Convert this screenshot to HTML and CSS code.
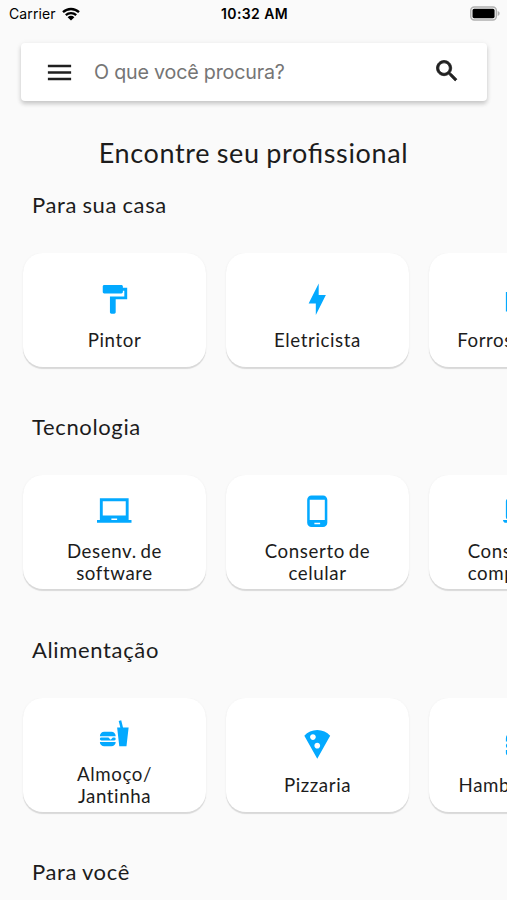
FILE: index.html
```html
<!DOCTYPE html>
<html lang="pt-BR">
  <head>
    <meta charset="UTF-8" />
    <title>Encontre seu profissional</title>
    <link rel="stylesheet" href="styles.css">
  </head>
  <body>
    <div class="status">
      <div class="carrier">
        <span>Carrier</span>
        <svg class="wifi" viewBox="0 0 18 14">
          <path d="M1 5.2a11.6 11.6 0 0 1 16 0M3.8 8.2a7.6 7.6 0 0 1 10.4 0" fill="none" stroke="#000" stroke-width="2.3" />
          <path d="M9 13.6L5.6 10.2a4.9 4.9 0 0 1 6.8 0z" />
        </svg>
      </div>
      <div class="time">10:32 AM</div>
      <div class="power">
        <svg class="battery" viewBox="0 0 31 15">
          <rect x=".8" y=".8" width="26.4" height="13.4" rx="3.6" fill="#fafafa" stroke="#b0b0b0" stroke-width="1.5" />
          <rect x="2.6" y="2.7" width="22.8" height="9.6" rx="1.6" />
          <path d="M28.6 5c1.3.4 2 1.3 2 2.5s-.7 2.1-2 2.5z" fill="#b0b0b0" />
        </svg>
      </div>
    </div>

    <div class="search">
      <svg class="menu" viewBox="0 0 24 24"><path d="M3 18h18v-2H3v2zm0-5h18v-2H3v2zm0-7v2h18V6H3z" /></svg>
      <span class="placeholder">O que você procura?</span>
      <svg class="lens" viewBox="0 0 24 24"><path d="M15.5 14h-.79l-.28-.27C15.41 12.59 16 11.11 16 9.5 16 5.91 13.09 3 9.5 3S3 5.91 3 9.5 5.91 16 9.5 16c1.61 0 3.09-.59 4.23-1.57l.27.28v.79l5 4.99L20.49 19l-4.99-5zm-6 0C7.01 14 5 11.99 5 9.5S7.01 5 9.5 5 14 7.01 14 9.5 11.99 14 9.5 14z" /></svg>
    </div>

    <h1>Encontre seu profissional</h1>

    <section>
      <h2>Para sua casa</h2>
      <div class="cards">
        <div class="card">
          <svg viewBox="0 0 24 24"><path d="M18 4V3c0-.55-.45-1-1-1H5c-.55 0-1 .45-1 1v4c0 .55.45 1 1 1h12c.55 0 1-.45 1-1V6h1v4H9v11c0 .55.45 1 1 1h2c.55 0 1-.45 1-1v-9h8V4h-3z" /></svg>
          <span>Pintor</span>
        </div>
        <div class="card">
          <svg viewBox="0 0 24 24"><path d="M11 15H6L13 1V9H18L11 23V15Z" /></svg>
          <span>Eletricista</span>
        </div>
        <div class="card">
          <svg viewBox="0 0 24 24"><path d="M2 7h20v13.5h-20z" /></svg>
          <span>Forros &amp; gesso</span>
        </div>
      </div>
    </section>

    <section>
      <h2>Tecnologia</h2>
      <div class="cards">
        <div class="card">
          <svg viewBox="0 0 24 24"><path d="M22 18V3H2v15H0v2h24v-2h-2zm-8 0h-4v-1h4v1zm6-3H4V5h16v10z" /></svg>
          <span>Desenv. de<br />software</span>
        </div>
        <div class="card">
          <svg viewBox="0 0 24 24"><path d="M16 1H8C6.34 1 5 2.34 5 4v16c0 1.66 1.34 3 3 3h8c1.66 0 3-1.34 3-3V4c0-1.66-1.34-3-3-3zm-2 20h-4v-1h4v1zm3.25-3H6.75V4h10.5v14z" /></svg>
          <span>Conserto de<br />celular</span>
        </div>
        <div class="card">
          <svg viewBox="0 0 24 24"><path d="M20 18c1.1 0 2-.9 2-2V5c0-1.1-.9-2-2-2H4c-1.1 0-2 .9-2 2v11c0 1.1.9 2 2 2H0c0 1.1.9 2 2 2h20c1.1 0 2-.9 2-2h-4zM4 5h16v11H4V5z" /></svg>
          <span>Conserto de<br />computador</span>
        </div>
      </div>
    </section>

    <section>
      <h2>Alimentação</h2>
      <div class="cards">
        <div class="card">
          <svg viewBox="0 0 24 24"><path d="M15.5,21L14,8H16.23L15.1,3.46L16.84,3L18.09,8H22L20.5,21H15.5M5,11H10A3,3 0 0,1 13,14H2A3,3 0 0,1 5,11M13,18A3,3 0 0,1 10,21H5A3,3 0 0,1 2,18H13M3,15H8L9.5,16.5L11,15H12A1,1 0 0,1 13,16A1,1 0 0,1 12,17H3A1,1 0 0,1 2,16A1,1 0 0,1 3,15Z" /></svg>
          <span>Almoço/<br />Jantinha</span>
        </div>
        <div class="card">
          <svg viewBox="0 0 24 24"><path d="M12 2C8.43 2 5.23 3.54 3.01 6L12 22l8.99-16C18.78 3.55 15.57 2 12 2zM7 7c0-1.1.9-2 2-2s2 .9 2 2-.9 2-2 2-2-.9-2-2zm5 8c-1.1 0-2-.9-2-2s.9-2 2-2 2 .9 2 2-.9 2-2 2z" /></svg>
          <span>Pizzaria</span>
        </div>
        <div class="card">
          <svg viewBox="0 0 24 24"><path d="M2,16H22V18C22,19.11 21.11,20 20,20H4C2.89,20 2,19.11 2,18V16M6,4H18C20.22,4 22,5.78 22,8V10H2V8C2,5.78 3.78,4 6,4M4,11H15L17,13L19,11H20C21.11,11 22,11.89 22,13C22,14.11 21.11,15 20,15H4C2.89,15 2,14.11 2,13C2,11.89 2.89,11 4,11Z" /></svg>
          <span>Hamburgueria</span>
        </div>
      </div>
    </section>

    <section class="last">
      <h2>Para você</h2>
    </section>
  </body>
</html>
```

FILE: styles.css
```css
body {
  margin: 0;
  height: 900px;
  overflow: hidden;
  background-color: #fafafa;
  color: #1c1c1c;
  font-family: Lato, sans-serif;
}
.status {
  display: grid;
  grid-template-columns: 1fr auto 1fr;
  align-items: center;
  height: 27px;
  padding: 0 7px 0 9px;
  color: #000;
  font: 14px Inter, sans-serif;
}
.carrier {
  display: flex;
  align-items: center;
  gap: 6px;
  letter-spacing: .1px;
}
.wifi {
  width: 18px;
  height: 14px;
}
.time {
  font-weight: 600;
  letter-spacing: .4px;
}
.power {
  display: flex;
  justify-content: flex-end;
}
.battery {
  width: 30px;
  height: 15px;
}
.search {
  display: flex;
  align-items: center;
  box-sizing: border-box;
  height: 58px;
  margin: 16px 20px 0 21px;
  padding: 0 26px 0 23px;
  border-radius: 4px;
  background-color: #fff;
  box-shadow: 0 3px 4px rgba(0, 0, 0, .17), 0 1px 6px rgba(0, 0, 0, .07);
}
.search svg {
  fill: #202020;
}
.menu {
  width: 31px;
  height: 31px;
}
.placeholder {
  flex: 1;
  margin-left: 19px;
  color: #757575;
  font: 19.7px Inter, sans-serif;
  letter-spacing: -.2px;
}
.lens {
  width: 28px;
  height: 28px;
  margin-bottom: 2px;
  stroke: #202020;
  stroke-width: .7px;
}
h1 {
  margin: 35px 0 0;
  font-size: 27px;
  line-height: 34px;
  font-weight: normal;
  text-align: center;
  letter-spacing: .65px;
  word-spacing: -1px;
  font-feature-settings: "liga" 1;
}
section {
  height: 222.4px;
}
.last {
  height: auto;
}
h1 + section {
  margin-top: 21px;
}
h2 {
  margin: 0 0 34px 32px;
  font-size: 22px;
  line-height: 28px;
  font-weight: normal;
  letter-spacing: .65px;
  word-spacing: -1px;
}
.last h2 {
  margin-bottom: 0;
}
.cards {
  display: flex;
  gap: 20px;
  padding-left: 23px;
  overflow: hidden;
  padding-bottom: 6px;
}
.card {
  display: flex;
  flex: none;
  flex-direction: column;
  align-items: center;
  justify-content: center;
  gap: 12px;
  box-sizing: border-box;
  width: 183px;
  height: 114px;
  padding-top: 13px;
  border-radius: 20px;
  background-color: #fff;
  box-shadow: 0 1.5px 1px rgba(0, 0, 0, .13), 0 0 3px rgba(0, 0, 0, .03);
  font-size: 18.7px;
  line-height: 22px;
  text-align: center;
  letter-spacing: .6px;
  word-spacing: -1.5px;
}
.card svg {
  width: 34.5px;
  height: 34.5px;
  fill: #03a9ff;
}
```
